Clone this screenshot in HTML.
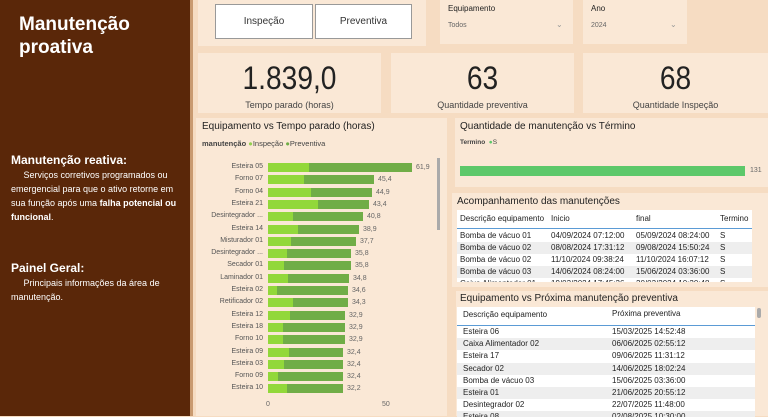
<!DOCTYPE html>
<html><head><meta charset="utf-8"><style>
*{margin:0;padding:0;box-sizing:border-box}
body{width:768px;height:416px;overflow:hidden;background:#f6dcc2;font-family:"Liberation Sans","DejaVu Sans",sans-serif;position:relative;color:#333}
.a{position:absolute}
.card{position:absolute;background:#fae8d6}
.left{left:0;top:0;width:190px;height:416px;background:#5a2709;color:#fff}
.lbl{font-size:7px;color:#555;text-align:right;width:70px}
.val{font-size:7px;color:#666}
.bar{position:absolute;height:9px}
.t{font-size:8px;color:#222;white-space:nowrap}
.kpi{font-size:32px;color:#222;transform:scaleX(.88)}
</style></head><body>
<div class="left a">
<div class="a" style="left:19px;top:13px;font-size:19px;font-weight:bold;line-height:23px">Manutenção<br>proativa</div>
<div class="a" style="left:11px;top:153px;font-size:12px;font-weight:bold">Manutenção reativa:</div>
<div class="a" style="left:11px;top:168px;width:170px;font-size:9px;line-height:14px">&nbsp;&nbsp;&nbsp;&nbsp;&nbsp;Serviços corretivos programados ou emergencial para que o ativo retorne em sua função após uma <b>falha potencial ou funcional</b>.</div>
<div class="a" style="left:11px;top:261px;font-size:12px;font-weight:bold">Painel Geral:</div>
<div class="a" style="left:11px;top:276px;width:170px;font-size:9px;line-height:14px">&nbsp;&nbsp;&nbsp;&nbsp;&nbsp;Principais informações da área de manutenção.</div>
</div>
<div class="a" style="left:190px;top:0;width:3px;height:416px;background:#c99a70"></div>

<div class="card" style="left:198px;top:0;width:228px;height:46px"></div>
<div class="a" style="left:215px;top:4px;width:98px;height:35px;background:#fff;border:1px solid #999;font-size:10px;text-align:center;line-height:33px">Inspeção</div>
<div class="a" style="left:315px;top:4px;width:97px;height:35px;background:#fff;border:1px solid #999;font-size:10px;text-align:center;line-height:33px">Preventiva</div>

<div class="card" style="left:440px;top:0;width:133px;height:44px"></div>
<div class="a t" style="left:448px;top:4px">Equipamento</div>
<div class="a" style="left:448px;top:22px;font-size:7px;color:#666">Todos</div>
<div class="a" style="left:556px;top:20px;font-size:8px;color:#999">⌄</div>
<div class="card" style="left:583px;top:0;width:104px;height:44px"></div>
<div class="a t" style="left:591px;top:4px">Ano</div>
<div class="a" style="left:591px;top:22px;font-size:7px;color:#666">2024</div>
<div class="a" style="left:670px;top:20px;font-size:8px;color:#999">⌄</div>

<div class="card" style="left:198px;top:53px;width:183px;height:60px"></div>
<div class="card" style="left:391px;top:53px;width:183px;height:60px"></div>
<div class="card" style="left:583px;top:53px;width:185px;height:60px"></div>
<div class="a kpi" style="left:198px;top:60px;width:183px;text-align:center">1.839,0</div>
<div class="a" style="left:198px;top:100px;width:183px;text-align:center;font-size:9px;color:#444">Tempo parado (horas)</div>
<div class="a kpi" style="left:391px;top:60px;width:183px;text-align:center">63</div>
<div class="a" style="left:391px;top:100px;width:183px;text-align:center;font-size:9px;color:#444">Quantidade preventiva</div>
<div class="a kpi" style="left:583px;top:60px;width:185px;text-align:center">68</div>
<div class="a" style="left:583px;top:100px;width:185px;text-align:center;font-size:9px;color:#444">Quantidade Inspeção</div>

<div class="card" style="left:196px;top:118px;width:251px;height:298px"></div>
<div class="a" style="left:202px;top:121px;font-size:10px;color:#222">Equipamento vs Tempo parado (horas)</div>
<div class="a" style="left:202px;top:139px;font-size:7.5px;color:#444"><b>manutenção</b> <span style="color:#92d050">●</span>Inspeção <span style="color:#70ad47">●</span>Preventiva</div>
<div class="a" style="left:437px;top:158px;width:3px;height:72px;background:#aaa"></div>
<div id="bars"></div>
<div class="a val" style="left:266px;top:401px">0</div>
<div class="a val" style="left:382px;top:401px">50</div>

<div class="card" style="left:455px;top:118px;width:313px;height:69px"></div>
<div class="a" style="left:460px;top:121px;font-size:10px;color:#222">Quantidade de manutenção vs Término</div>
<div class="a" style="left:460px;top:139px;font-size:6.5px;color:#444"><b>Termino</b> &nbsp;<span style="color:#5dc86a">●</span>S</div>
<div class="a" style="left:460px;top:166px;width:285px;height:10px;background:#5dc86a"></div>
<div class="a val" style="left:750px;top:167px">131</div>

<div class="card" style="left:452px;top:193px;width:316px;height:94px"></div>
<div class="a" style="left:457px;top:196px;font-size:10px;color:#222">Acompanhamento das manutenções</div>
<div class="a" style="left:457px;top:210px;width:295px;height:72px;background:#fff"></div>
<div class="a" style="left:457px;top:228px;width:295px;height:1px;background:#5b9bd5"></div>
<div id="t1"></div>

<div class="card" style="left:456px;top:291px;width:312px;height:125px"></div>
<div class="a" style="left:460px;top:293px;font-size:10px;color:#222">Equipamento vs Próxima manutenção preventiva</div>
<div class="a" style="left:457px;top:307px;width:298px;height:109px;background:#fff"></div>
<div class="a" style="left:457px;top:325px;width:298px;height:1px;background:#5b9bd5"></div>
<div class="a" style="left:757px;top:308px;width:4px;height:10px;background:#aaa;border-radius:2px"></div>
<div id="t2"></div>

<script>
var d=[["Esteira 05",41,144,"61,9"],["Forno 07",36,106,"45,4"],["Forno 04",43,104,"44,9"],["Esteira 21",50,101,"43,4"],["Desintegrador ...",25,95,"40,8"],["Esteira 14",30,91,"38,9"],["Misturador 01",23,88,"37,7"],["Desintegrador ...",19,83,"35,8"],["Secador 01",16,83,"35,8"],["Laminador 01",20,81,"34,8"],["Esteira 02",9,80,"34,6"],["Retificador 02",25,80,"34,3"],["Esteira 12",22,77,"32,9"],["Esteira 18",15,77,"32,9"],["Forno 10",15,77,"32,9"],["Esteira 09",21,75,"32,4"],["Esteira 03",16,75,"32,4"],["Forno 09",10,75,"32,4"],["Esteira 10",19,75,"32,2"]];
var h="";d.forEach(function(r,i){var y=163+i*12.3;
h+='<div class="a lbl" style="left:193px;top:'+(y)+'px">'+r[0]+'</div>';
h+='<div class="bar" style="left:268px;top:'+y+'px;width:'+r[2]+'px;background:#70ad47"></div>';
h+='<div class="bar" style="left:268px;top:'+y+'px;width:'+r[1]+'px;background:#92d83a"></div>';
h+='<div class="a val" style="left:'+(272+r[2])+'px;top:'+(y+1)+'px">'+r[3]+'</div>';});
document.getElementById("bars").innerHTML=h;
var t=[["Bomba de vácuo 01","04/09/2024 07:12:00","05/09/2024 08:24:00"],["Bomba de vácuo 02","08/08/2024 17:31:12","09/08/2024 15:50:24"],["Bomba de vácuo 02","11/10/2024 09:38:24","11/10/2024 16:07:12"],["Bomba de vácuo 03","14/06/2024 08:24:00","15/06/2024 03:36:00"],["Caixa Alimentador 01","19/03/2024 17:45:36","20/03/2024 10:30:48"]];
h='<div class="a t" style="left:460px;top:214px">Descrição equipamento</div><div class="a t" style="left:551px;top:214px">Inicio</div><div class="a t" style="left:636px;top:214px">final</div><div class="a t" style="left:720px;top:214px">Termino</div>';
t.forEach(function(r,i){var y=230+i*12;var hh=i==4?4:12;
h+='<div class="a" style="left:457px;top:'+y+'px;width:295px;height:'+hh+'px;overflow:hidden;background:'+(i%2?'#eee':'#fff')+'"><span class="a t" style="left:3px;top:1px">'+r[0]+'</span><span class="a t" style="left:94px;top:1px">'+r[1]+'</span><span class="a t" style="left:179px;top:1px">'+r[2]+'</span><span class="a t" style="left:263px;top:1px">S</span></div>';});
document.getElementById("t1").innerHTML=h;
var p=[["Esteira 06","15/03/2025 14:52:48"],["Caixa Alimentador 02","06/06/2025 02:55:12"],["Esteira 17","09/06/2025 11:31:12"],["Secador 02","14/06/2025 18:02:24"],["Bomba de vácuo 03","15/06/2025 03:36:00"],["Esteira 01","21/06/2025 20:55:12"],["Desintegrador 02","22/07/2025 11:48:00"],["Esteira 08","02/08/2025 10:30:00"]];
h='<div class="a t" style="left:463px;top:310px">Descrição equipamento</div><div class="a t" style="left:612px;top:309px">Próxima preventiva</div>';
p.forEach(function(r,i){var y=326+i*12.2;var hh=i==7?6:12;
h+='<div class="a" style="left:457px;top:'+y+'px;width:298px;height:'+hh+'px;overflow:hidden;background:'+(i%2?'#eee':'#fff')+'"><span class="a t" style="left:6px;top:1px">'+r[0]+'</span><span class="a t" style="left:155px;top:1px">'+r[1]+'</span></div>';});
document.getElementById("t2").innerHTML=h;
</script>
</body></html>
